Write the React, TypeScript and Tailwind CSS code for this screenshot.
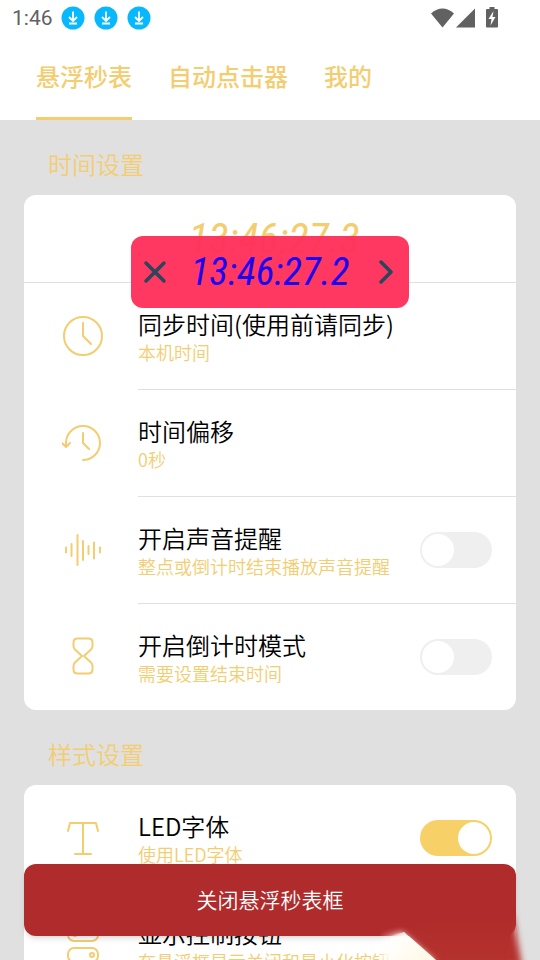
import type { ReactNode } from 'react';

const ICON = {
  width: 42,
  height: 42,
  viewBox: '0 0 42 42',
  fill: 'none',
  stroke: '#f3cd70',
  strokeWidth: 2,
  strokeLinecap: 'round' as const,
  strokeLinejoin: 'round' as const,
  'aria-hidden': true,
};

const ClockIcon = () => (
  <svg {...ICON}>
    <circle cx="21" cy="21" r="19" />
    <path d="M21 8v13l8 8" />
  </svg>
);

const HistoryIcon = () => (
  <svg {...ICON}>
    <path d="M4 25V21a17 17 0 1 1 17 17M0 21l4 4 4-4M21 11v10l6 6" />
  </svg>
);

const SoundIcon = () => (
  <svg {...ICON}>
    <path d="M4 18.500v5M9.500 15v12M15.500 6v30M21 12v19M26.500 17v8M32 13.500v16M38 18.500v5" />
  </svg>
);

const HourglassIcon = () => (
  <svg {...ICON}>
    <path d="M15.500 3.500h11q4 0 4 4v3.500q0 2-1.500 3.500L22 21l7 6.500q1.500 1.500 1.500 3.500v3.500q0 4-4 4h-11q-4 0-4-4V31q0-2 1.500-3.500L20 21l-7-6.500Q11.500 13 11.500 11V7.500q0-4 4-4Z" />
  </svg>
);

const FontIcon = () => (
  <svg {...ICON}>
    <path d="M6 14l2-8h26l2 8M21 6v31M13 37h16" />
  </svg>
);

const ControlsIcon = () => (
  <svg {...ICON}>
    <rect x="6" y="4" width="30" height="14" rx="6" />
    <circle cx="13" cy="11" r="2" />
    <rect x="6" y="25" width="30" height="14" rx="6" />
    <circle cx="30" cy="32" r="2" />
  </svg>
);

const DownloadBadge = () => (
  <svg width="24" height="24" viewBox="0 0 24 24" fill="none" stroke="#fff" strokeWidth="1.800" aria-hidden="true">
    <circle cx="12" cy="12" r="11.500" fill="#08b8ff" stroke="none" />
    <path d="M12 5.500v9M8 11l4 4 4-4M8 17.500h8" />
  </svg>
);

function StatusBar() {
  return (
    <div className="flex h-9 items-center justify-between pr-10 pl-3 text-[#616161]">
      <div className="flex items-center gap-[9px]">
        <span className="w-10 font-['Roboto',sans-serif] text-[21px] leading-6 whitespace-nowrap">1:46</span>
        <DownloadBadge />
        <DownloadBadge />
        <DownloadBadge />
      </div>
      <svg width="70" height="22" viewBox="0 0 70 22" fill="currentColor" aria-hidden="true">
        <path d="M1 6.500Q12.500-3.500 24 6.500L12.500 20.500Z" />
        <path d="M45 1.500v19H26Z" />
        <path d="M59.500 0h5v2H67q1 0 1 1v16.500q0 1-1 1H57q-1 0-1-1V3q0-1 1-1h2.500Z" />
        <path fill="#fff" d="M63.500 4 58.500 12h3l-1 6.500 5-8.500h-3Z" />
      </svg>
    </div>
  );
}

function Switch({ id, on }: { id: string; on?: boolean }) {
  return (
    <input
      id={id}
      type="checkbox"
      role="switch"
      defaultChecked={on}
      className="h-9 w-[72px] shrink-0 cursor-pointer appearance-none rounded-full bg-[#efefef] p-0.5 before:block before:size-8 before:rounded-full before:bg-white checked:bg-[#f8d068] checked:before:translate-x-9"
    />
  );
}

interface RowProps {
  icon: ReactNode;
  title: string;
  hint: string;
  switchId?: string;
  on?: boolean;
}

function Row({ icon, title, hint, switchId, on }: RowProps) {
  const text = (
    <>
      <span className="block text-2xl leading-8 text-black">{title}</span>
      <span className="block text-lg leading-6 text-[#f3cd70]">{hint}</span>
    </>
  );
  return (
    <li className="group flex items-center pl-[38px]">
      <span className="pb-0.5">{icon}</span>
      <div className="ml-[34px] flex h-[107px] min-w-0 flex-1 items-center justify-between border-b border-[#e0e0e0] pr-6 font-[350] whitespace-nowrap group-last:h-[106px] group-last:border-0">
        {switchId ? <label htmlFor={switchId}>{text}</label> : <button className="text-left">{text}</button>}
        {switchId && <Switch id={switchId} on={on} />}
      </div>
    </li>
  );
}

const SectionTitle = ({ children }: { children: ReactNode }) => (
  <h2 className="px-6 pt-7 pb-[15px] text-2xl leading-8 font-[350] text-[#f3cd70]">{children}</h2>
);

function FloatingTimer() {
  return (
    <div className="absolute top-[236px] left-1/2 flex h-[72px] w-[278px] -translate-x-1/2 items-center justify-between rounded-xl bg-[#ff2d58]/95 px-3 text-[#28465c]">
      <button aria-label="关闭">
        <svg width="24" height="24" viewBox="0 0 24 24" stroke="currentColor" strokeWidth="3.500" strokeLinecap="round">
          <path d="M3 3l18 18M21 3 3 21" />
        </svg>
      </button>
      <span className="font-['Roboto_Condensed','Liberation_Sans_Narrow',sans-serif] text-[39px] leading-none text-[#1c00f0] italic">
        13:46:27.2
      </span>
      <button aria-label="展开">
        <svg width="24" height="24" viewBox="0 0 24 24" fill="none" stroke="currentColor" strokeWidth="3.500" strokeLinecap="round" strokeLinejoin="round">
          <path d="M8 2l10 10L8 22" />
        </svg>
      </button>
    </div>
  );
}

// Soft-edged smear over the bottom right corner
const CornerSmear = () => (
  <svg className="pointer-events-none absolute right-0 bottom-0" width="160" height="60" viewBox="0 0 160 60" aria-hidden="true">
    <defs>
      <filter id="soft" x="-50%" y="-50%" width="200%" height="200%">
        <feGaussianBlur stdDeviation="3" />
      </filter>
      <linearGradient id="cream" x1="0" y1="0" x2="1" y2="0.500">
        <stop offset="0" stopColor="#fff" stopOpacity="0" />
        <stop offset="0.300" stopColor="#fffefa" stopOpacity="0.900" />
        <stop offset="1" stopColor="#fff9e8" />
      </linearGradient>
      <linearGradient id="red" x1="0" y1="0" x2="0" y2="1">
        <stop offset="0.200" stopColor="#b02b2b" />
        <stop offset="1" stopColor="#b4322e" />
      </linearGradient>
    </defs>
    <path d="M110 66 126 30 133 14 142 66Z" fill="#b4322e" filter="url(#soft)" />
    <path d="M22 30 56 60H126L132 30 134 6 100 8Z" fill="url(#red)" />
    <path d="M2 36 22 32 56 62H2Z" fill="url(#cream)" filter="url(#soft)" />
    <path d="M10 36 24 32 55 60H10Z" fill="url(#cream)" />
  </svg>
);

export default function App() {
  return (
    <div className="relative flex h-screen flex-col overflow-hidden bg-[#e0e0e0] font-['Noto_Sans_CJK_SC',sans-serif]">
      <header className="shrink-0 bg-white">
        <StatusBar />
        <nav className="flex gap-9 px-9 text-2xl font-medium text-[#f3cd70]">
          <a href="#timer" className="flex h-[84px] items-center border-b-3 border-[#f3cd70] pb-0.5">悬浮秒表</a>
          <a href="#clicker" className="flex h-[84px] items-center border-b-3 border-transparent pb-0.5">自动点击器</a>
          <a href="#me" className="flex h-[84px] items-center border-b-3 border-transparent pb-0.5">我的</a>
        </nav>
      </header>

      <main className="min-h-0 flex-1 overflow-y-auto px-6 [scrollbar-width:none]">
        <SectionTitle>时间设置</SectionTitle>
        <section className="rounded-xl bg-white">
          <div className="flex h-22 items-center justify-center border-b border-[#e0e0e0] pl-2 font-['Roboto_Condensed','Liberation_Sans_Narrow',sans-serif] text-[42px] leading-none text-[#f3cd70] italic">
            13:46:27.3
          </div>
          <ul>
            <Row icon={<ClockIcon />} title="同步时间(使用前请同步)" hint="本机时间" />
            <Row icon={<HistoryIcon />} title="时间偏移" hint="0秒" />
            <Row icon={<SoundIcon />} title="开启声音提醒" hint="整点或倒计时结束播放声音提醒" switchId="sound" />
            <Row icon={<HourglassIcon />} title="开启倒计时模式" hint="需要设置结束时间" switchId="countdown" />
          </ul>
        </section>

        <SectionTitle>样式设置</SectionTitle>
        <section className="rounded-xl bg-white">
          <ul>
            <Row icon={<FontIcon />} title="LED字体" hint="使用LED字体" switchId="led" on />
            <Row icon={<ControlsIcon />} title="显示控制按钮" hint="在悬浮框显示关闭和最小化按钮" />
          </ul>
        </section>
      </main>

      <FloatingTimer />

      <button className="absolute inset-x-6 bottom-6 h-[72px] rounded-xl bg-[#b02b2b] text-[21px] font-[350] text-white shadow-md">
        关闭悬浮秒表框
      </button>
      <CornerSmear />
    </div>
  );
}
